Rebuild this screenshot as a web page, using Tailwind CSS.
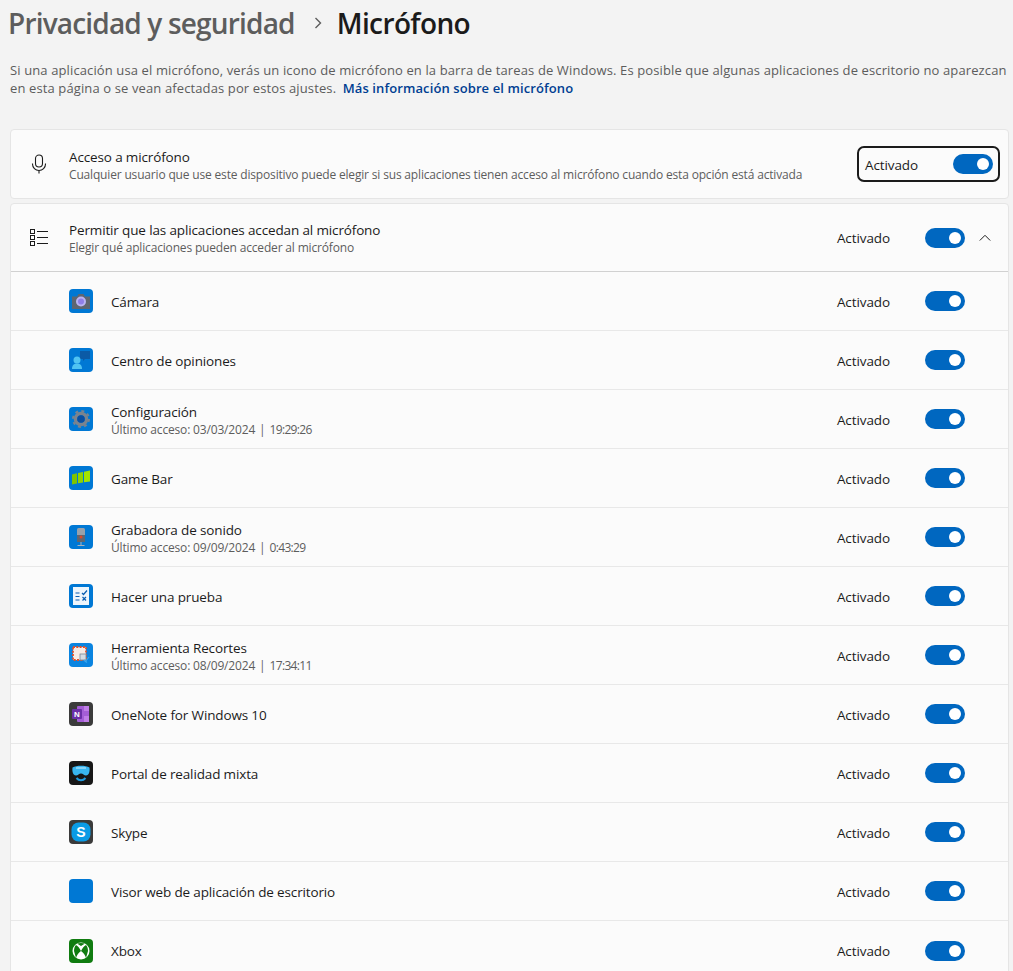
<!DOCTYPE html>
<html lang="es">
<head>
  <meta charset="UTF-8" />
  <title>Micrófono</title>
  <script src="https://cdn.jsdelivr.net/npm/@tailwindcss/browser@4"></script>
</head>
<body class="h-[971px] overflow-hidden bg-[#f3f3f3] font-['Open_Sans','Noto_Sans',sans-serif] text-[#1b1b1b]">
  <header class="flex items-center h-[46px] pl-[8px] text-[28px] leading-[46px] font-semibold">
    <span class="text-[#5d5d5d] tracking-[-0.82px]">Privacidad y seguridad</span>
    <svg class="w-[12px] h-[12px] ml-[17px] mr-[13px]" viewBox="0 0 12 12" fill="none" stroke="#5d5d5d" stroke-width="1.4"><path d="M3.500 1l5 5-5 5"/></svg>
    <span class="tracking-[-0.6px]">Micrófono</span>
  </header>

  <p class="mt-[15px] ml-[10px] w-[1000px] text-[13px] leading-[18px] text-[#5c5c5c] tracking-[0.12px]">Si una aplicación usa el micrófono, verás un icono de micrófono en la barra de tareas de Windows. Es posible que algunas aplicaciones de escritorio no aparezcan en esta página o se vean afectadas por estos ajustes. <a class="ml-[3px] font-semibold text-[#003e92] tracking-[0.1px]">Más información sobre el micrófono</a></p>

  <section class="mt-[32px] mx-[10px] w-[999px] h-[70px] flex items-center bg-[#fbfbfb] border border-[#e5e5e5] rounded-[4px]">
    <div class="w-[58px] flex justify-center pr-[2px]">
      <svg class="w-[18px] h-[20px]" viewBox="0 0 18 20" fill="none" stroke="#1b1b1b" stroke-width="1.1"><rect x="5.500" y="1" width="7" height="12" rx="3.500"/><path d="M2.500 9.500v.5a6.500 6.500 0 0 0 13 0v-.5M9 16.500V19.500"/></svg>
    </div>
    <div class="flex-1 min-w-0 pt-[2px]">
      <div class="text-[13.5px] leading-[19px] tracking-[-0.14px]">Acceso a micrófono</div>
      <div class="text-[12px] leading-[15px] text-[#5d5d5d] tracking-[-0.17px] whitespace-nowrap">Cualquier usuario que use este dispositivo puede elegir si sus aplicaciones tienen acceso al micrófono cuando esta opción está activada</div>
    </div>
    <div class="flex items-center justify-between w-[143px] h-[36px] mr-[8px] pl-[6px] pr-[5px] border-2 border-[#1b1b1b] rounded-[7px]">
      <span class="text-[13.5px] tracking-[-0.1px] pt-[2px]">Activado</span>
      <span class="flex items-center justify-end w-[40px] h-[20px] pr-[4px] rounded-full bg-[#0067c0]"><span class="w-[12px] h-[12px] rounded-full bg-white"></span></span>
    </div>
  </section>

  <section class="mt-[4px] mx-[10px] w-[999px] bg-[#fbfbfb] border border-[#e5e5e5] rounded-t-[4px]">
    <div class="flex items-center h-[68px] border-b border-[#d1d1d1]">
      <div class="w-[58px] flex justify-center pr-[2px]">
        <svg class="w-[20px] h-[19px]" viewBox="0 0 20 19" fill="none" stroke="#1b1b1b" stroke-width="1"><rect x="1.500" y="1.500" width="4" height="4"/><rect x="1.500" y="7.500" width="4" height="4"/><rect x="1.500" y="13.500" width="4" height="4"/><path d="M8 3.500h11M8 9.500h11M8 15.500h11"/></svg>
      </div>
      <div class="flex-1 min-w-0">
        <div class="text-[13.5px] leading-[19px] tracking-[-0.14px]">Permitir que las aplicaciones accedan al micrófono</div>
        <div class="text-[12px] leading-[15px] text-[#5d5d5d] tracking-[-0.17px]">Elegir qué aplicaciones pueden acceder al micrófono</div>
      </div>
      <span class="text-[13.5px] tracking-[-0.1px] pt-[2px]">Activado</span>
      <span class="flex items-center justify-end w-[40px] h-[20px] ml-[35px] pr-[4px] rounded-full bg-[#0067c0]"><span class="w-[12px] h-[12px] rounded-full bg-white"></span></span>
      <svg class="w-[12px] h-[8px] ml-[14px] mr-[17px]" viewBox="0 0 12 8" fill="none" stroke="#1b1b1b" stroke-width="1"><path d="M.8 6.500L6 1.300l5.200 5.200"/></svg>
    </div>

    <!-- Cámara -->
    <div class="flex items-center h-[59px] border-b border-[#e8e8e8]">
      <svg class="ml-[58px] mr-[18px] w-[24px] h-[24px] shrink-0" viewBox="0 0 24 24"><rect width="24" height="24" rx="4" fill="#0078d4"/><path d="M3 7.500h5l1.500-2.500h5L16 7.500h5V20H3z" fill="#5f6670"/><circle cx="12" cy="12.500" r="5" fill="#b9b4f2"/><circle cx="12" cy="12.500" r="3" fill="#8f7fe8"/></svg>
      <div class="flex-1 min-w-0 pt-[2px] text-[13.5px] leading-[19px] tracking-[-0.14px]">Cámara</div>
      <span class="text-[13.5px] tracking-[-0.1px] pt-[2px]">Activado</span>
      <span class="flex items-center justify-end w-[40px] h-[20px] ml-[35px] mr-[43px] pr-[4px] rounded-full bg-[#0067c0]"><span class="w-[12px] h-[12px] rounded-full bg-white"></span></span>
    </div>
    <!-- Centro de opiniones -->
    <div class="flex items-center h-[59px] border-b border-[#e8e8e8]">
      <svg class="ml-[58px] mr-[18px] w-[24px] h-[24px] shrink-0" viewBox="0 0 24 24"><rect width="24" height="24" rx="4" fill="#0078d4"/><path d="M11 3h10v8h-5l-2 2v-2h-3z" fill="#0b5aa6"/><circle cx="8" cy="12" r="3.500" fill="#4fc3f2"/><path d="M3 21c0-4 2-5.500 5-5.500s5 1.500 5 5.500z" fill="#4fc3f2"/></svg>
      <div class="flex-1 min-w-0 pt-[2px] text-[13.5px] leading-[19px] tracking-[-0.14px]">Centro de opiniones</div>
      <span class="text-[13.5px] tracking-[-0.1px] pt-[2px]">Activado</span>
      <span class="flex items-center justify-end w-[40px] h-[20px] ml-[35px] mr-[43px] pr-[4px] rounded-full bg-[#0067c0]"><span class="w-[12px] h-[12px] rounded-full bg-white"></span></span>
    </div>
    <!-- Configuración -->
    <div class="flex items-center h-[59px] border-b border-[#e8e8e8]">
      <svg class="ml-[58px] mr-[18px] w-[24px] h-[24px] shrink-0" viewBox="0 0 24 24"><rect width="24" height="24" rx="4" fill="#0078d4"/><circle cx="12" cy="12" r="5.500" fill="none" stroke="#7a838e" stroke-width="3.500"/><circle cx="12" cy="12" r="8" fill="none" stroke="#7a838e" stroke-width="2" stroke-dasharray="3 3.300"/><circle cx="12" cy="12" r="3.800" fill="#0a4ea0"/></svg>
      <div class="flex-1 min-w-0 pt-[2px]">
        <div class="text-[13.5px] leading-[19px] tracking-[-0.14px]">Configuración</div>
        <div class="flex text-[12px] leading-[15px] text-[#5d5d5d] tracking-[-0.17px]"><span>Último acceso: 03/03/2024</span><span class="mx-[4px]">|</span><span class="tracking-[-0.67px]">19:29:26</span></div>
      </div>
      <span class="text-[13.5px] tracking-[-0.1px] pt-[2px]">Activado</span>
      <span class="flex items-center justify-end w-[40px] h-[20px] ml-[35px] mr-[43px] pr-[4px] rounded-full bg-[#0067c0]"><span class="w-[12px] h-[12px] rounded-full bg-white"></span></span>
    </div>
    <!-- Game Bar -->
    <div class="flex items-center h-[59px] border-b border-[#e8e8e8]">
      <svg class="ml-[58px] mr-[18px] w-[24px] h-[24px] shrink-0" viewBox="0 0 24 24"><rect width="24" height="24" rx="4" fill="#0078d4"/><path d="M3 8.500l5-1.300v10.300L3 18.500z" fill="#7fc300"/><path d="M9 7l5-1v10.500l-5 .8z" fill="#8fd400"/><path d="M15 5.800l6-1.300v11l-6 .8z" fill="#a4e400"/></svg>
      <div class="flex-1 min-w-0 pt-[2px] text-[13.5px] leading-[19px] tracking-[-0.14px]">Game Bar</div>
      <span class="text-[13.5px] tracking-[-0.1px] pt-[2px]">Activado</span>
      <span class="flex items-center justify-end w-[40px] h-[20px] ml-[35px] mr-[43px] pr-[4px] rounded-full bg-[#0067c0]"><span class="w-[12px] h-[12px] rounded-full bg-white"></span></span>
    </div>
    <!-- Grabadora de sonido -->
    <div class="flex items-center h-[59px] border-b border-[#e8e8e8]">
      <svg class="ml-[58px] mr-[18px] w-[24px] h-[24px] shrink-0" viewBox="0 0 24 24"><rect width="24" height="24" rx="4" fill="#0078d4"/><rect x="8" y="3" width="8" height="14" rx="1.500" fill="#98a1ab"/><rect x="8" y="10" width="8" height="7" fill="#5f6670"/><circle cx="12" cy="12" r="1.500" fill="#d9482b"/><path d="M12 17v3M8.500 20.500h7" stroke="#aab2bc" stroke-width="1"/></svg>
      <div class="flex-1 min-w-0 pt-[2px]">
        <div class="text-[13.5px] leading-[19px] tracking-[-0.14px]">Grabadora de sonido</div>
        <div class="flex text-[12px] leading-[15px] text-[#5d5d5d] tracking-[-0.17px]"><span>Último acceso: 09/09/2024</span><span class="mx-[4px]">|</span><span class="tracking-[-0.67px]">0:43:29</span></div>
      </div>
      <span class="text-[13.5px] tracking-[-0.1px] pt-[2px]">Activado</span>
      <span class="flex items-center justify-end w-[40px] h-[20px] ml-[35px] mr-[43px] pr-[4px] rounded-full bg-[#0067c0]"><span class="w-[12px] h-[12px] rounded-full bg-white"></span></span>
    </div>
    <!-- Hacer una prueba -->
    <div class="flex items-center h-[59px] border-b border-[#e8e8e8]">
      <svg class="ml-[58px] mr-[18px] w-[24px] h-[24px] shrink-0" viewBox="0 0 24 24"><rect width="24" height="24" rx="4" fill="#0078d4"/><rect x="4" y="3" width="16" height="18" fill="#eef6fc"/><path d="M6.500 9h4M6.500 12.500h4M6.500 16h4" stroke="#0a5db0" stroke-width="1.200"/><path d="M13 9l1.500 1.500L18 6.500M13.500 13l3.500 3.500M17 13l-3.500 3.500" stroke="#0a5db0" stroke-width="1.200" fill="none"/></svg>
      <div class="flex-1 min-w-0 pt-[2px] text-[13.5px] leading-[19px] tracking-[-0.14px]">Hacer una prueba</div>
      <span class="text-[13.5px] tracking-[-0.1px] pt-[2px]">Activado</span>
      <span class="flex items-center justify-end w-[40px] h-[20px] ml-[35px] mr-[43px] pr-[4px] rounded-full bg-[#0067c0]"><span class="w-[12px] h-[12px] rounded-full bg-white"></span></span>
    </div>
    <!-- Herramienta Recortes -->
    <div class="flex items-center h-[59px] border-b border-[#e8e8e8]">
      <svg class="ml-[58px] mr-[18px] w-[24px] h-[24px] shrink-0" viewBox="0 0 24 24"><rect width="24" height="24" rx="4" fill="#0a84e0"/><rect x="4" y="4" width="13" height="13" fill="#f7ece6" stroke="#e2502a" stroke-width="1.800" stroke-dasharray="2 1.300"/><rect x="11" y="11" width="6" height="6" fill="#d5dde5" stroke="#7b8794" stroke-width=".8"/><path d="M15 17l3 2.500M20 14l-4 5" stroke="#3aa6ee" stroke-width="1.200"/></svg>
      <div class="flex-1 min-w-0 pt-[2px]">
        <div class="text-[13.5px] leading-[19px] tracking-[-0.14px]">Herramienta Recortes</div>
        <div class="flex text-[12px] leading-[15px] text-[#5d5d5d] tracking-[-0.17px]"><span>Último acceso: 08/09/2024</span><span class="mx-[4px]">|</span><span class="tracking-[-0.67px]">17:34:11</span></div>
      </div>
      <span class="text-[13.5px] tracking-[-0.1px] pt-[2px]">Activado</span>
      <span class="flex items-center justify-end w-[40px] h-[20px] ml-[35px] mr-[43px] pr-[4px] rounded-full bg-[#0067c0]"><span class="w-[12px] h-[12px] rounded-full bg-white"></span></span>
    </div>
    <!-- OneNote -->
    <div class="flex items-center h-[59px] border-b border-[#e8e8e8]">
      <svg class="ml-[58px] mr-[18px] w-[24px] h-[24px] shrink-0" viewBox="0 0 24 24"><rect width="24" height="24" rx="4" fill="#3b3b3b"/><rect x="8" y="4" width="12" height="16" rx="1" fill="#a45dd6"/><path d="M15 4h5v5h-5zM15 14h5v6h-5z" fill="#c07de8"/><rect x="3" y="7" width="10" height="10" rx="1" fill="#6b2fa8"/><text x="8" y="15" text-anchor="middle" font-family="Liberation Sans" font-size="8" font-weight="700" fill="#fff">N</text></svg>
      <div class="flex-1 min-w-0 pt-[2px] text-[13.5px] leading-[19px] tracking-[-0.14px]">OneNote for Windows 10</div>
      <span class="text-[13.5px] tracking-[-0.1px] pt-[2px]">Activado</span>
      <span class="flex items-center justify-end w-[40px] h-[20px] ml-[35px] mr-[43px] pr-[4px] rounded-full bg-[#0067c0]"><span class="w-[12px] h-[12px] rounded-full bg-white"></span></span>
    </div>
    <!-- Portal de realidad mixta -->
    <div class="flex items-center h-[59px] border-b border-[#e8e8e8]">
      <svg class="ml-[58px] mr-[18px] w-[24px] h-[24px] shrink-0" viewBox="0 0 24 24"><rect width="24" height="24" rx="4" fill="#171717"/><path d="M3.500 6.500c4-2.500 13-2.500 17 0 .5 4-.5 8-3.500 8-2 0-3-2-5-2s-3 2-5 2c-3 0-4-4-3.500-8z" fill="#38b6f1"/><path d="M7 7h10" stroke="#9fdcf8" stroke-width="1.500"/><path d="M7.500 17c2.500 3 6.500 3 9 0" fill="none" stroke="#1f9be0" stroke-width="2"/></svg>
      <div class="flex-1 min-w-0 pt-[2px] text-[13.5px] leading-[19px] tracking-[-0.14px]">Portal de realidad mixta</div>
      <span class="text-[13.5px] tracking-[-0.1px] pt-[2px]">Activado</span>
      <span class="flex items-center justify-end w-[40px] h-[20px] ml-[35px] mr-[43px] pr-[4px] rounded-full bg-[#0067c0]"><span class="w-[12px] h-[12px] rounded-full bg-white"></span></span>
    </div>
    <!-- Skype -->
    <div class="flex items-center h-[59px] border-b border-[#e8e8e8]">
      <svg class="ml-[58px] mr-[18px] w-[24px] h-[24px] shrink-0" viewBox="0 0 24 24"><rect width="24" height="24" rx="4" fill="#3b3b3b"/><rect x="2.500" y="2.500" width="19" height="19" rx="7" fill="#0a9be6"/><text x="12" y="17" text-anchor="middle" font-family="Liberation Sans" font-size="14" font-weight="700" fill="#fff">S</text></svg>
      <div class="flex-1 min-w-0 pt-[2px] text-[13.5px] leading-[19px] tracking-[-0.14px]">Skype</div>
      <span class="text-[13.5px] tracking-[-0.1px] pt-[2px]">Activado</span>
      <span class="flex items-center justify-end w-[40px] h-[20px] ml-[35px] mr-[43px] pr-[4px] rounded-full bg-[#0067c0]"><span class="w-[12px] h-[12px] rounded-full bg-white"></span></span>
    </div>
    <!-- Visor web -->
    <div class="flex items-center h-[59px] border-b border-[#e8e8e8]">
      <svg class="ml-[58px] mr-[18px] w-[24px] h-[24px] shrink-0" viewBox="0 0 24 24"><rect width="24" height="24" rx="4" fill="#0078d4"/></svg>
      <div class="flex-1 min-w-0 pt-[2px] text-[13.5px] leading-[19px] tracking-[-0.14px]">Visor web de aplicación de escritorio</div>
      <span class="text-[13.5px] tracking-[-0.1px] pt-[2px]">Activado</span>
      <span class="flex items-center justify-end w-[40px] h-[20px] ml-[35px] mr-[43px] pr-[4px] rounded-full bg-[#0067c0]"><span class="w-[12px] h-[12px] rounded-full bg-white"></span></span>
    </div>
    <!-- Xbox -->
    <div class="flex items-center h-[59px]">
      <svg class="ml-[58px] mr-[18px] w-[24px] h-[24px] shrink-0" viewBox="0 0 24 24"><rect width="24" height="24" rx="4" fill="#107c10"/><circle cx="12" cy="12" r="8.500" fill="#fff"/><path d="M12 12c-2.500 2-4.500 4.500-5 7l-2-7c0-3 1-5 2-6 2 1 3.500 3 5 6zM12 12c2.500 2 4.500 4.500 5 7l2-7c0-3-1-5-2-6-2 1-3.500 3-5 6zM8 4.500c2-.8 6-.8 8 0l-4 2.500z" fill="#107c10"/></svg>
      <div class="flex-1 min-w-0 pt-[2px] text-[13.5px] leading-[19px] tracking-[-0.14px]">Xbox</div>
      <span class="text-[13.5px] tracking-[-0.1px] pt-[2px]">Activado</span>
      <span class="flex items-center justify-end w-[40px] h-[20px] ml-[35px] mr-[43px] pr-[4px] rounded-full bg-[#0067c0]"><span class="w-[12px] h-[12px] rounded-full bg-white"></span></span>
    </div>
  </section>
</body>
</html>
